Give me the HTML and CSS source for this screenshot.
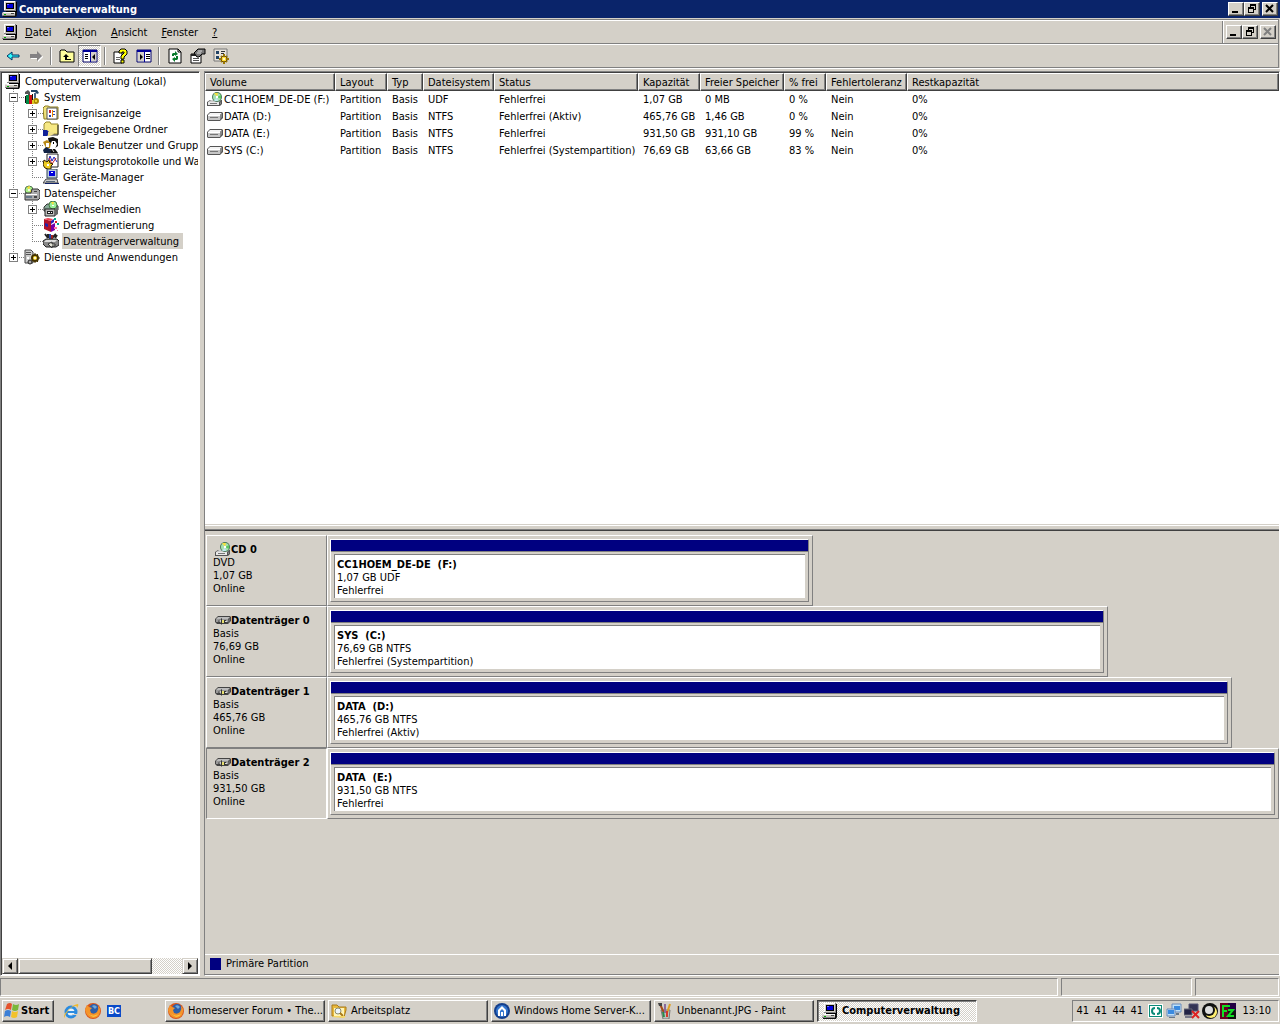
FILE: index.html
```html
<!DOCTYPE html>
<html lang="de">
<head>
  <meta charset="UTF-8">
  <meta name="viewport" content="width=device-width, initial-scale=1.0">
  <title>Computerverwaltung</title>
  <link rel="stylesheet" href="styles.css">
</head>
<body>

<svg class="sprite" aria-hidden="true">
  <symbol id="computer" viewBox="0 0 16 16">
    <path d="M2 0h12v10H2z" fill="#848284"/><path d="M2 0h11v9H2z" fill="#fff"/><path d="M3 1h10v8H3z" fill="#d4d0c8"/><path d="M14 1h1v10H4v-1h10z" fill="#000"/>
    <path d="M4 2h8v6H4z" fill="#000"/><path d="M5 3h6v4H5z" fill="#00d"/><path d="M5 3h2v1H5z" fill="#66f"/>
    <path d="M1 11h12v3H0v-2z" fill="#c8c4bc"/><path d="M2 11h11v1H1z" fill="#fff"/><path d="M13 11h2v3l-1 2H1v-1h12z" fill="#111"/><path d="M0 14h13v1H0z" fill="#848284"/><path d="M9 12h3v1H9z" fill="#444"/><path d="M2 13h2v1H2z" fill="#0a0"/>
  </symbol>
  <symbol id="drive" viewBox="0 0 16 16">
    <path d="M3 3h12l1 1v5l-3 3H1l-1-1V6z" fill="#555"/><path d="M3 4h12l-2 2H1z" fill="#f4f4f4"/><path d="M1 6h12v5H1z" fill="#c6c6c6"/><path d="M1 6h12v1H1z" fill="#fff"/><path d="M13 6l2-2v4l-2 3z" fill="#888"/><path d="M3 8h8v1H3z" fill="#777"/>
  </symbol>
  <symbol id="disk" viewBox="0 0 16 16">
    <path d="M3 3h12l1 1v4l-3 3H2L0 9V6z" fill="#444"/><path d="M3 4h12l-2 2H1z" fill="#bbb"/><path d="M1 6h12v3H1z" fill="#999"/><path d="M13 7l2-2v3l-2 2z" fill="#666"/>
    <path d="M3 8l4-3v2h4v3H7v2z" fill="#333"/><path d="M4 8l2-2v4z" fill="#ccc"/><path d="M7 7h2v3H7z" fill="#e8e070"/><path d="M10 8h2v1h-2z" fill="#ddd"/>
  </symbol>
  <symbol id="cd" viewBox="0 0 16 16">
    <path d="M3 8h12v4l-2 2H0v-4z" fill="#555"/><path d="M4 8h10l-2 2H1z" fill="#ccc"/><path d="M1 10h11v3H1z" fill="#e8e8e8"/><path d="M3 11h7v1H3z" fill="#777"/><path d="M13 11l1-2v3h-1z" fill="#888"/>
    <circle cx="10" cy="5" r="5" fill="#487858"/><circle cx="10" cy="5" r="4" fill="#a6e0b0"/><path d="M10 5L7 1h4z" fill="#f4e040"/><path d="M10 5l4-2v4z" fill="#58c860"/><path d="M10 5l1 4H7z" fill="#bfe8f0"/><path d="M9 4h2v2H9z" fill="#fff"/>
  </symbol>
  <symbol id="back" viewBox="0 0 16 16"><path d="M2 8l5-4v3h7v2H7v3z" fill="#3ff" stroke="#036" stroke-width="1"/></symbol>
  <symbol id="forward" viewBox="0 0 16 16"><path d="M15 9l-5 5v-3H3v-1h7l5-2z" fill="#fff"/><path d="M14 8L9 3v3H2v4h7v3z" fill="#848284"/></symbol>
  <symbol id="folder-up" viewBox="0 0 16 16">
    <path d="M1 13V3l1-1h4l2 2h7v10H1z" fill="#ffff9c" stroke="#000"/><path d="M7 6l-3 3h2v3h6v-1H8V9h2z" fill="#000"/>
  </symbol>
  <symbol id="tree-pane" viewBox="0 0 16 16">
    <path d="M1 2h14v12H1z" fill="#fff" stroke="#006"/><path d="M1 2h14v2H1z" fill="#009"/><path d="M8 4h1v10H8z" fill="#009"/><path d="M3 6h3v1H3zM3 8h3v1H3zM3 10h3v1H3z" fill="#000"/><path d="M9 4h5v9H9z" fill="#d4d0c8"/><path d="M13 6v6l-3-3z" fill="#000"/>
  </symbol>
  <symbol id="action-pane" viewBox="0 0 16 16">
    <path d="M1 2h14v12H1z" fill="#fff" stroke="#006"/><path d="M1 2h14v2H1z" fill="#009"/><path d="M8 4h1v10H8z" fill="#009"/><path d="M10 6h4v1h-4zM10 8h4v1h-4zM10 10h4v1h-4z" fill="#000"/><path d="M2 4h6v9H2z" fill="#d4d0c8"/><path d="M4 6v6l3-3z" fill="#000"/>
  </symbol>
  <symbol id="help" viewBox="0 0 16 16">
    <path d="M1 4h8v11H1z" fill="#fff" stroke="#000"/><path d="M3 9h4v1H3zM3 11h4v1H3z" fill="#666"/>
    <path d="M6 5V3l2-2h4l2 2v3l-3 3v2H8V8l3-3V4H9v1z" fill="#ff0" stroke="#000"/><path d="M8 12h3v3H8z" fill="#ff0" stroke="#000"/>
  </symbol>
  <symbol id="refresh" viewBox="0 0 16 16">
    <path d="M2 1h9l3 3v11H2z" fill="#fff" stroke="#000"/><path d="M11 1v3h3" fill="none" stroke="#000"/>
    <path d="M5 8V6l1-1h2V3l3 3-3 2V7H7v1zM11 8v3l-1 1H8v2l-3-3 3-2v1h1V8z" fill="#087a2c"/>
  </symbol>
  <symbol id="properties" viewBox="0 0 16 16">
    <path d="M1 6h10v9H1z" fill="#fff" stroke="#000"/><path d="M1 6h10v2H1z" fill="#222"/><path d="M3 10h6v1H3zM3 12h6v1H3z" fill="#555"/><path d="M4 5l4-4h7v5h-3L9 9H7z" fill="#777" stroke="#000"/><path d="M8 3h4M7 5h4" stroke="#ddd"/>
  </symbol>
  <symbol id="settings" viewBox="0 0 16 16">
    <path d="M1 1h13v12H1z" fill="#e8e4dc" stroke="#777"/><path d="M3 3h3v3H3zM3 8h3v3H3z" fill="#246"/><path d="M8 3h4v1H8zM8 5h3v1H8z" fill="#333"/>
    <circle cx="11" cy="11" r="3" fill="#fd3" stroke="#530"/><path d="M11 6v2M11 14v2M6 11h2M14 11h2M8 8l1 1M13 13l1 1M14 8l-1 1M9 13l-1 1" stroke="#970" stroke-width="2"/><circle cx="11" cy="11" r="1" fill="#fff"/>
  </symbol>
  <symbol id="tools" viewBox="0 0 16 16">
    <path d="M1 3l3-2 2 2v4H4V5H1z" fill="#555"/><path d="M7 1h6l2 3-2 1-2-2H7z" fill="#246"/><path d="M10 4h2v7h-2z" fill="#468"/><path d="M2 6h3v9H2z" fill="#084"/><path d="M5 6h3v9H5z" fill="#c11"/><path d="M1 7h1v7H1zM8 5h1v9H8z" fill="#111"/>
    <circle cx="12" cy="12" r="2" fill="#fe4" stroke="#a80" stroke-width="2"/><path d="M8 11h2v4H8z" fill="#dc2"/>
  </symbol>
  <symbol id="events" viewBox="0 0 16 16">
    <path d="M0 3l2-2h3l2 1h8v12H1z" fill="#efe27a" stroke="#8a7a20"/><path d="M4 3h10v11H4z" fill="#fff" stroke="#555"/><path d="M6 5h2v3H6z" fill="#c22"/><path d="M9 6h3v1H9zM9 9h3v1H9zM6 10h2v2H6z" fill="#24a"/><path d="M9 5h1v7H9z" fill="#e80"/>
  </symbol>
  <symbol id="shared" viewBox="0 0 16 16">
    <path d="M1 13V3l2-2h4l1 2h7v10z" fill="#f6e884" stroke="#97862c"/><path d="M15 4v10H4" fill="none" stroke="#222"/><path d="M0 9h4l2 2-2 4H0z" fill="#129"/><path d="M5 11h5l1 2-4 2H5z" fill="#f0e08c"/>
  </symbol>
  <symbol id="users" viewBox="0 0 16 16">
    <path d="M5 1l5-1 5 2v7l-3 2-6-5z" fill="#111"/><path d="M9 4h3l2 3-2 5H9L7 8z" fill="#fff"/><path d="M10 5h1v2h-1z" fill="#000"/><path d="M0 5l4-2 4 3-1 5H3z" fill="#b98a18"/><path d="M3 6h3v4H3z" fill="#fff"/><path d="M0 13l3-3 4 2 2 4H1z" fill="#124"/><path d="M7 12h5l3 4H8z" fill="#111"/><path d="M9 12l2 3" stroke="#ddd"/>
  </symbol>
  <symbol id="perf" viewBox="0 0 16 16">
    <path d="M4 1h11v13H4z" fill="#fff" stroke="#222"/><path d="M5 9l2-6 2 5 2-4 3 5" fill="none" stroke="#22b"/><path d="M6 5l3 6 4-6" fill="none" stroke="#c22"/><path d="M1 7l3 2 2-2 1 3 3 1-2 2v3H5l-3-1-2-3z" fill="#ec2" stroke="#320"/><path d="M4 11h2v2H4z" fill="#fff"/>
  </symbol>
  <symbol id="devices" viewBox="0 0 16 16">
    <path d="M4 0h10v9H4z" fill="#bcd" stroke="#345"/><path d="M6 2h6v5H6z" fill="#00d"/><path d="M8 3h2v1H8z" fill="#fff"/><path d="M3 10h11l1 4H0z" fill="#ccc" stroke="#444"/><path d="M3 12h9v1H3z" fill="#567"/><path d="M2 14h14v1H2z" fill="#126"/>
  </symbol>
  <symbol id="storage" viewBox="0 0 16 16">
    <circle cx="5" cy="5" r="4" fill="#ae8" stroke="#575"/><path d="M5 5l-2-3 3-1zM5 5l3 1-1 2z" fill="#fd3"/><circle cx="5" cy="5" r="1" fill="#fff"/>
    <path d="M1 8h6l1-4h6l2 2v7l-2 2H1z" fill="#aaa" stroke="#333"/><path d="M2 9h11v1H2z" fill="#fff"/><path d="M10 6h3v1h-3zM10 11h3v2h-3z" fill="#444"/><path d="M2 11h6v2H2z" fill="#678"/>
  </symbol>
  <symbol id="removable" viewBox="0 0 16 16">
    <path d="M1 6l3-3h7l4 2v4l-3 1H1z" fill="#8a9" stroke="#333"/><circle cx="10" cy="4" r="4" fill="#9e9" stroke="#474"/><path d="M10 4L8 1h3z" fill="#fd3"/><path d="M9 4h2v1H9z" fill="#fff"/><path d="M2 8h10v7H2z" fill="#bbb" stroke="#222"/><path d="M12 8l3-2v7l-3 2z" fill="#666"/><path d="M4 10h6v3H4z" fill="#222"/><path d="M5 11h2v1H5zM8 11h1v1H8z" fill="#fff"/>
  </symbol>
  <symbol id="defrag" viewBox="0 0 16 16">
    <path d="M1 2l7 2v11l-7-3z" fill="#b0122a"/><path d="M1 2l4-1 5 1-2 2z" fill="#e45"/><path d="M8 4l3-2v3l-3 2z" fill="#22b"/><path d="M8 8l4-2v7l-4 2z" fill="#70a"/><path d="M11 1h2v2h-2zM14 6h2v2h-2z" fill="#0a8"/><path d="M12 4h2v2h-2z" fill="#d22"/><path d="M11 10h3v2h-3zM14 13h1v1h-1z" fill="#f7a"/><path d="M2 6l3 1v3l-3-1z" fill="#22a"/>
  </symbol>
  <symbol id="diskmgmt" viewBox="0 0 16 16">
    <path d="M2 1l3 4M5 1v4M9 5l4-4M12 5l2-3" stroke="#222" stroke-width="2"/><path d="M6 1h2v5H6z" fill="#24a"/><path d="M8 2h2v4H8z" fill="#a02020"/><path d="M3 6h11l2 2v4l-3 2H3l-3-3V8z" fill="#888" stroke="#222"/><path d="M3 7h11l-2 2H1z" fill="#ddd"/><path d="M5 11l4-2v2h3v2H9v2z" fill="#e4e4d8" stroke="#333"/>
  </symbol>
  <symbol id="services" viewBox="0 0 16 16">
    <path d="M1 1h6l2 2v11H1z" fill="#ccc" stroke="#444"/><path d="M2 3h5v1H2zM2 5h5v1H2z" fill="#555"/><path d="M3 8h2v2H3z" fill="#fff"/><circle cx="11" cy="9" r="3" fill="#fd3" stroke="#430" stroke-width="2"/><circle cx="11" cy="9" r="1" fill="#fff"/><path d="M11 4v2M11 12v2M15 9h1M14 5l-1 1M8 12l-1 1M14 13l-1-1" stroke="#430"/><circle cx="6" cy="13" r="2" fill="#aaa" stroke="#222"/>
  </symbol>
  <symbol id="windows" viewBox="0 0 16 16">
    <path d="M3 1q3-2 5 0L7 7Q4 5 1 7z" fill="#e5532d"/><path d="M9 1q3 2 6 0l-1 6q-3 2-6 0z" fill="#7ab83a"/><path d="M1 8q3-2 6 0l-1 6q-3-2-6 0z" fill="#3c7fd6"/><path d="M8 8q3 2 6 0l-1 6q-3 2-6 0z" fill="#f3c22b"/>
  </symbol>
  <symbol id="ie" viewBox="0 0 16 16">
    <circle cx="8" cy="9" r="5" fill="#e8f4fc" stroke="#2b8be0" stroke-width="3"/><path d="M4 8h9v2H4z" fill="#2b8be0"/><path d="M9 11h6v1H9z" fill="#d4d0c8"/><path d="M2 15Q-1 13 5 7T15 1q1 1-1 4 0-2-1-2Q9 3 5 8t-3 7z" fill="#f0b92c"/>
  </symbol>
  <symbol id="firefox" viewBox="0 0 16 16">
    <circle cx="8" cy="8" r="8" fill="#d9541a"/><circle cx="9" cy="6" r="5" fill="#2e5fa8"/><path d="M7 3q3-2 5 1l-2 2z" fill="#6fa8dc"/><path d="M0 7L2 2l2 2 3 1-2 2 1 3q3 2 6-1 2-3 1-6 3 3 2 6-1 6-7 6-6 0-8-8z" fill="#f4942a"/><path d="M3 10q4 5 10 1-4 6-10-1z" fill="#fdd24a"/>
  </symbol>
  <symbol id="explorer" viewBox="0 0 16 16">
    <path d="M1 13V2h5l2 2h7v3l-2 7z" fill="#e9b93c" stroke="#a97a18"/><path d="M3 5h10v8H3z" fill="#fff5b8"/><circle cx="7" cy="8" r="3" fill="#eef6fb" stroke="#8a8a70"/><path d="M9 10l3 3" stroke="#a97a18" stroke-width="2"/><path d="M1 14l2-1h12l-2 2z" fill="#f6d868"/>
  </symbol>
  <symbol id="home-server" viewBox="0 0 16 16">
    <circle cx="8" cy="8" r="8" fill="#143f8c"/><circle cx="8" cy="8" r="6" fill="#3577cf"/><path d="M4 13V7l4-4 4 4v6h-2V8L8 6 6 8v5z" fill="#fff"/><path d="M7 9h2v4H7z" fill="#fff"/>
  </symbol>
  <symbol id="paint" viewBox="0 0 16 16">
    <path d="M4 7h9l-1 9H6z" fill="#b9c3bd" stroke="#777"/><path d="M3 1l4 9" stroke="#a34a1a" stroke-width="2"/><path d="M8 1v9" stroke="#8a6a9a" stroke-width="2"/><path d="M13 1l-3 9" stroke="#e0a020" stroke-width="2"/><path d="M6 9l1 5" stroke="#2a8a4a" stroke-width="2"/><path d="M10 8v6" stroke="#d33a2a" stroke-width="2"/><path d="M1 0h4v3H2z" fill="#444"/>
  </symbol>
  <symbol id="tray-sync" viewBox="0 0 16 16"><path d="M0 1h15v14H0z" fill="#fff"/><path d="M1 2h13v12H1z" fill="#0b8a78"/><path d="M2 3h11v10H2z" fill="#fff"/><path d="M7 4Q3 4 3 8t4 4v-2Q5 10 5 8t2-2zM9 4v2q2 0 2 2t-2 2v2q4 0 4-4T9 4z" fill="#0b8a78"/></symbol>
  <symbol id="tray-net" viewBox="0 0 16 16"><path d="M6 1h9v8H6z" fill="#bfe0f8" stroke="#6a8aba"/><path d="M8 3h6v4H8z" fill="#3a8ae0"/><path d="M1 6h8v7H1z" fill="#bfe0f8" stroke="#6a8aba"/><path d="M2 7h6v4H2z" fill="#3a8ae0"/><path d="M3 14h6v1H3zM10 10h3v2h-3z" fill="#678"/></symbol>
  <symbol id="tray-offline" viewBox="0 0 16 16"><path d="M5 1h9v7H5z" fill="#335" stroke="#557"/><path d="M0 6h8v6H0z" fill="#224" stroke="#667"/><path d="M1 13h7v2H1z" fill="#778"/><path d="M8 8l7 7M15 8l-7 7" stroke="#d22" stroke-width="2"/></symbol>
  <symbol id="tray-moon" viewBox="0 0 16 16"><circle cx="8" cy="8" r="8" fill="#111"/><circle cx="9" cy="9" r="6" fill="#ffee70"/><circle cx="7" cy="7" r="6" fill="#111"/><circle cx="7" cy="7" r="4" fill="#ddd"/></symbol>
  <symbol id="tray-fz" viewBox="0 0 16 16"><path d="M0 0h16v16H0z" fill="#111"/><path d="M0 0h8v16H0z" fill="#602"/><path d="M8 0h8v8H8z" fill="#204"/><path d="M3 14V3h7M3 8h4M8 7h5l-5 6h6" fill="none" stroke="#1d2" stroke-width="2"/></symbol>
  <symbol id="min" viewBox="0 0 12 10"><path d="M2 7h6v2H2z" fill="#000"/></symbol>
  <symbol id="restore" viewBox="0 0 12 10"><path d="M4 0h6v6H8V5h1V2H5v1H4zM2 3h6v6H2zM3 5v3h4V5z" fill="#000" fill-rule="evenodd"/></symbol>
  <symbol id="close" viewBox="0 0 12 10"><path d="M2 1l7 7M9 1L2 8" stroke="currentColor" stroke-width="2"/></symbol>
</svg>

<header class="titlebar">
  <svg class="icon"><use href="#computer"/></svg>
  <h1>Computerverwaltung</h1>
  <div class="window-buttons">
    <button class="window-button" aria-label="Minimieren"><svg><use href="#min"/></svg></button>
    <button class="window-button" aria-label="Verkleinern"><svg><use href="#restore"/></svg></button>
    <button class="window-button close" aria-label="Schließen"><svg><use href="#close"/></svg></button>
  </div>
</header>

<div class="rebar">
  <nav class="menubar">
    <svg class="icon"><use href="#computer"/></svg>
    <div class="menus">
      <button class="menu"><u>D</u>atei</button>
      <button class="menu">Ak<u>t</u>ion</button>
      <button class="menu"><u>A</u>nsicht</button>
      <button class="menu"><u>F</u>enster</button>
      <button class="menu"><u>?</u></button>
    </div>
    <div class="window-buttons mdi">
      <button class="window-button" aria-label="Minimieren"><svg><use href="#min"/></svg></button>
      <button class="window-button" aria-label="Verkleinern"><svg><use href="#restore"/></svg></button>
      <button class="window-button close" aria-label="Schließen" disabled><svg><use href="#close"/></svg></button>
    </div>
  </nav>
  <div class="toolbar">
    <button class="tool" aria-label="Zurück"><svg class="icon"><use href="#back"/></svg></button>
    <button class="tool" aria-label="Vorwärts" disabled><svg class="icon"><use href="#forward"/></svg></button>
    <span class="separator"></span>
    <button class="tool" aria-label="Aufwärts"><svg class="icon"><use href="#folder-up"/></svg></button>
    <button class="tool pressed" aria-label="Konsolenstruktur"><svg class="icon"><use href="#tree-pane"/></svg></button>
    <span class="separator"></span>
    <button class="tool" aria-label="Hilfe"><svg class="icon"><use href="#help"/></svg></button>
    <button class="tool" aria-label="Aktionsbereich"><svg class="icon"><use href="#action-pane"/></svg></button>
    <span class="separator"></span>
    <button class="tool" aria-label="Aktualisieren"><svg class="icon"><use href="#refresh"/></svg></button>
    <button class="tool" aria-label="Eigenschaften"><svg class="icon"><use href="#properties"/></svg></button>
    <button class="tool" aria-label="Einstellungen"><svg class="icon"><use href="#settings"/></svg></button>
  </div>
</div>

<main class="content">
  <aside class="pane tree-view">
    <div class="tree">
      <div class="node root"><svg class="icon"><use href="#computer"/></svg><span>Computerverwaltung (Lokal)</span></div>
      <ul>
        <li>
          <div class="node"><button class="toggle open" aria-label="Reduzieren"></button><svg class="icon"><use href="#tools"/></svg><span>System</span></div>
          <ul>
            <li><div class="node"><button class="toggle" aria-label="Erweitern"></button><svg class="icon"><use href="#events"/></svg><span>Ereignisanzeige</span></div></li>
            <li><div class="node"><button class="toggle" aria-label="Erweitern"></button><svg class="icon"><use href="#shared"/></svg><span>Freigegebene Ordner</span></div></li>
            <li><div class="node"><button class="toggle" aria-label="Erweitern"></button><svg class="icon"><use href="#users"/></svg><span>Lokale Benutzer und Gruppen</span></div></li>
            <li><div class="node"><button class="toggle" aria-label="Erweitern"></button><svg class="icon"><use href="#perf"/></svg><span>Leistungsprotokolle und Warnungen</span></div></li>
            <li><div class="node leaf"><svg class="icon"><use href="#devices"/></svg><span>Geräte-Manager</span></div></li>
          </ul>
        </li>
        <li>
          <div class="node"><button class="toggle open" aria-label="Reduzieren"></button><svg class="icon"><use href="#storage"/></svg><span>Datenspeicher</span></div>
          <ul>
            <li><div class="node"><button class="toggle" aria-label="Erweitern"></button><svg class="icon"><use href="#removable"/></svg><span>Wechselmedien</span></div></li>
            <li><div class="node leaf"><svg class="icon"><use href="#defrag"/></svg><span>Defragmentierung</span></div></li>
            <li><div class="node leaf"><svg class="icon"><use href="#diskmgmt"/></svg><span class="selected">Datenträgerverwaltung</span></div></li>
          </ul>
        </li>
        <li>
          <div class="node"><button class="toggle" aria-label="Erweitern"></button><svg class="icon"><use href="#services"/></svg><span>Dienste und Anwendungen</span></div>
        </li>
      </ul>
    </div>
    <div class="scrollbar">
      <button class="scroll-button left" aria-label="Nach links"></button>
      <div class="track"><div class="thumb"></div></div>
      <button class="scroll-button right" aria-label="Nach rechts"></button>
    </div>
  </aside>

  <section class="pane detail">
    <div class="volume-list">
      <table class="volumes">
        <colgroup>
          <col class="col-volume"><col class="col-layout"><col class="col-type"><col class="col-fs"><col class="col-status">
          <col class="col-capacity"><col class="col-free"><col class="col-percent"><col class="col-fault"><col>
        </colgroup>
        <thead>
          <tr><th>Volume</th><th>Layout</th><th>Typ</th><th>Dateisystem</th><th>Status</th><th>Kapazität</th><th>Freier Speicher</th><th>% frei</th><th>Fehlertoleranz</th><th>Restkapazität</th></tr>
        </thead>
        <tbody>
          <tr><td><svg class="icon"><use href="#cd"/></svg>CC1HOEM_DE-DE (F:)</td><td>Partition</td><td>Basis</td><td>UDF</td><td>Fehlerfrei</td><td>1,07 GB</td><td>0 MB</td><td>0 %</td><td>Nein</td><td>0%</td></tr>
          <tr><td><svg class="icon"><use href="#drive"/></svg>DATA (D:)</td><td>Partition</td><td>Basis</td><td>NTFS</td><td>Fehlerfrei (Aktiv)</td><td>465,76 GB</td><td>1,46 GB</td><td>0 %</td><td>Nein</td><td>0%</td></tr>
          <tr><td><svg class="icon"><use href="#drive"/></svg>DATA (E:)</td><td>Partition</td><td>Basis</td><td>NTFS</td><td>Fehlerfrei</td><td>931,50 GB</td><td>931,10 GB</td><td>99 %</td><td>Nein</td><td>0%</td></tr>
          <tr><td><svg class="icon"><use href="#drive"/></svg>SYS (C:)</td><td>Partition</td><td>Basis</td><td>NTFS</td><td>Fehlerfrei (Systempartition)</td><td>76,69 GB</td><td>63,66 GB</td><td>83 %</td><td>Nein</td><td>0%</td></tr>
        </tbody>
      </table>
    </div>
    <div class="splitter"></div>
    <div class="disks">
      <div class="disk">
        <div class="disk-label">
          <h2><svg class="icon"><use href="#cd"/></svg>CD 0</h2>
          <p>DVD</p><p>1,07 GB</p><p>Online</p>
        </div>
        <div class="disk-area">
          <div class="disk-bar" style="width: 51.1%">
            <div class="partition"><div class="stripe"></div><div class="info"><h3>CC1HOEM_DE-DE&nbsp; (F:)</h3><p>1,07 GB UDF</p><p>Fehlerfrei</p></div></div>
          </div>
        </div>
      </div>
      <div class="disk">
        <div class="disk-label">
          <h2><svg class="icon"><use href="#disk"/></svg>Datenträger 0</h2>
          <p>Basis</p><p>76,69 GB</p><p>Online</p>
        </div>
        <div class="disk-area">
          <div class="disk-bar" style="width: 82%">
            <div class="partition"><div class="stripe"></div><div class="info"><h3>SYS&nbsp; (C:)</h3><p>76,69 GB NTFS</p><p>Fehlerfrei (Systempartition)</p></div></div>
          </div>
        </div>
      </div>
      <div class="disk">
        <div class="disk-label">
          <h2><svg class="icon"><use href="#disk"/></svg>Datenträger 1</h2>
          <p>Basis</p><p>465,76 GB</p><p>Online</p>
        </div>
        <div class="disk-area">
          <div class="disk-bar" style="width: 95.1%">
            <div class="partition"><div class="stripe"></div><div class="info"><h3>DATA&nbsp; (D:)</h3><p>465,76 GB NTFS</p><p>Fehlerfrei (Aktiv)</p></div></div>
          </div>
        </div>
      </div>
      <div class="disk">
        <div class="disk-label active">
          <h2><svg class="icon"><use href="#disk"/></svg>Datenträger 2</h2>
          <p>Basis</p><p>931,50 GB</p><p>Online</p>
        </div>
        <div class="disk-area">
          <div class="disk-bar" style="width: 100%">
            <div class="partition"><div class="stripe"></div><div class="info"><h3>DATA&nbsp; (E:)</h3><p>931,50 GB NTFS</p><p>Fehlerfrei</p></div></div>
          </div>
        </div>
      </div>
    </div>
    <div class="legend"><span class="swatch"></span>Primäre Partition</div>
  </section>
</main>

<div class="statusbar"><span class="status-main"></span><span class="status-mid"></span><span class="status-end"></span></div>

<footer class="taskbar">
  <button class="start"><svg class="icon"><use href="#windows"/></svg>Start</button>
  <div class="quick-launch">
    <button class="quick" aria-label="Internet Explorer"><svg class="icon"><use href="#ie"/></svg></button>
    <button class="quick" aria-label="Firefox"><svg class="icon"><use href="#firefox"/></svg></button>
    <button class="quick"><span class="bc">BC</span></button>
  </div>
  <div class="tasks">
    <button class="task"><svg class="icon"><use href="#firefox"/></svg><span>Homeserver Forum • The...</span></button>
    <button class="task"><svg class="icon"><use href="#explorer"/></svg><span>Arbeitsplatz</span></button>
    <button class="task"><svg class="icon"><use href="#home-server"/></svg><span>Windows Home Server-K...</span></button>
    <button class="task"><svg class="icon"><use href="#paint"/></svg><span>Unbenannt.JPG - Paint</span></button>
    <button class="task current"><svg class="icon"><use href="#computer"/></svg><span>Computerverwaltung</span></button>
  </div>
  <div class="tray">
    <span class="temp">41</span><span class="temp">41</span><span class="temp">44</span><span class="temp">41</span>
    <svg class="icon"><use href="#tray-sync"/></svg>
    <svg class="icon"><use href="#tray-net"/></svg>
    <svg class="icon"><use href="#tray-offline"/></svg>
    <svg class="icon"><use href="#tray-moon"/></svg>
    <svg class="icon"><use href="#tray-fz"/></svg>
    <time class="clock">13:10</time>
  </div>
</footer>

</body>
</html>
```
FILE: styles.css
```css
* {
  box-sizing: border-box;
}

body {
  margin: 0;
  height: 100vh;
  display: flex;
  flex-direction: column;
  background-color: #d4d0c8;
  color: black;
  font-family: "DejaVu Sans Condensed", Tahoma, "DejaVu Sans", sans-serif;
  font-size: 11px;
  line-height: 13px;
  overflow: hidden;
}

h1, h2, h3, p, ul {
  margin: 0;
  padding: 0;
  font-size: 11px;
}

ul {
  list-style: none;
}

button {
  margin: 0;
  padding: 0;
  border: 0;
  background: none;
  color: inherit;
  font: inherit;
}

svg {
  display: block;
}

.sprite {
  display: none;
}

.icon {
  width: 16px;
  height: 16px;
  flex: none;
}

/* title bar */
.titlebar {
  display: flex;
  align-items: center;
  gap: 1px;
  height: 18px;
  padding: 0 2px;
  margin-bottom: 1px;
  background-color: #0a246a;
  color: white;
}

.titlebar h1 {
  flex: 1;
}

.window-buttons {
  display: flex;
}

.window-button {
  width: 16px;
  height: 14px;
  padding: 1px;
  background-color: #d4d0c8;
  border: 1px solid;
  border-color: white #404040 #404040 white;
  box-shadow: inset -1px -1px #808080;
  color: black;
}

.window-button svg {
  width: 12px;
  height: 10px;
}

.window-button.close {
  margin-left: 2px;
}

.window-button:disabled {
  color: #808080;
}

/* menu and toolbar */
.rebar {
  margin-right: 1px;
  border-top: 1px solid #808080;
  border-right: 1px solid #808080;
}

.menubar, .toolbar {
  display: flex;
  align-items: center;
  height: 24px;
  border-top: 1px solid white;
  border-bottom: 1px solid #808080;
}

.menubar {
  padding-left: 2px;
}

.menus {
  flex: 1;
  display: flex;
}

.menu {
  padding: 0 7px;
}

.mdi {
  align-self: stretch;
  align-items: center;
  padding: 0 2px;
  border-left: 1px solid white;
  box-shadow: -1px 0 #808080;
}

.toolbar {
  padding-left: 1px;
}

.tool {
  display: flex;
  align-items: center;
  justify-content: center;
  width: 23px;
  height: 22px;
}

.tool.pressed {
  border: 1px solid;
  border-color: #808080 white white #808080;
  background: repeating-conic-gradient(white 0 25%, #d4d0c8 0 50%) 0 0 / 2px 2px;
}

.separator {
  width: 2px;
  height: 18px;
  margin: 0 3px;
  border-left: 1px solid #808080;
  border-right: 1px solid white;
}

/* main area */
.content {
  flex: 1;
  min-height: 0;
  display: flex;
  gap: 4px;
  padding-top: 2px;
  border-top: 1px solid white;
}

.pane {
  display: flex;
  flex-direction: column;
  border: 1px solid;
  border-color: #808080 white white #808080;
}

.tree-view {
  flex: none;
  width: 200px;
  padding: 1px;
  background-color: white;
  box-shadow: inset 1px 1px #404040;
}

.tree {
  flex: 1;
  overflow: hidden;
}

.tree > ul {
  padding-left: 7px;
}

.tree ul ul {
  padding-left: 19px;
}

/* dotted connector lines */
.tree li {
  background: repeating-linear-gradient(#808080 0 1px, transparent 1px 2px) 4px 0 / 1px 100% no-repeat;
}

.tree li:last-child {
  background-size: 1px 8px;
}

.node {
  display: flex;
  align-items: center;
  height: 16px;
  white-space: nowrap;
  background: repeating-linear-gradient(90deg, #808080 0 1px, transparent 1px 2px) 4px 8px / 11px 1px no-repeat;
}

.node span {
  padding: 2px 4px 1px 1px;
  margin-left: 3px;
}

.node.root {
  padding-left: 3px;
  background: none;
}

.node.leaf {
  padding-left: 15px;
}

.node .selected {
  margin-left: 3px;
  background-color: #d4d0c8;
}

.toggle {
  width: 9px;
  height: 9px;
  flex: none;
  margin-right: 6px;
  border: 1px solid #808080;
  background:
    linear-gradient(black, black) 1px 3px / 5px 1px no-repeat,
    linear-gradient(black, black) 3px 1px / 1px 5px no-repeat,
    white;
}

.toggle.open {
  background: linear-gradient(black, black) 1px 3px / 5px 1px no-repeat, white;
}

.scrollbar {
  display: flex;
  height: 16px;
}

.scroll-button, .thumb {
  background-color: #d4d0c8;
  border: 1px solid;
  border-color: #d4d0c8 #404040 #404040 #d4d0c8;
  box-shadow: inset 1px 1px white, inset -1px -1px #808080;
}

.scroll-button {
  display: flex;
  align-items: center;
  justify-content: center;
  width: 16px;
}

.scroll-button::before {
  content: "";
  border: 4px solid transparent;
}

.scroll-button.left::before {
  border-left-width: 0;
  border-right-color: black;
}

.scroll-button.right::before {
  border-right-width: 0;
  border-left-color: black;
}

.track {
  flex: 1;
  background: repeating-conic-gradient(white 0 25%, #d4d0c8 0 50%) 0 0 / 2px 2px;
}

.thumb {
  width: 82%;
  height: 100%;
}

/* volume list */
.detail {
  flex: 1;
  min-width: 0;
  box-shadow: inset 0 1px #404040;
  padding-top: 1px;
}

.volume-list {
  flex: none;
  height: 50%;
  background-color: white;
}

.volumes {
  width: 100%;
  table-layout: fixed;
  border-collapse: separate;
  border-spacing: 0;
}

.volumes th, .volumes td {
  height: 17px;
  padding: 0 0 0 5px;
  text-align: left;
  font-weight: normal;
  white-space: nowrap;
}

.volumes th {
  height: 18px;
  background-color: #d4d0c8;
  border: 1px solid;
  border-color: white #404040 #404040 white;
  box-shadow: inset -1px -1px #808080;
  padding-left: 4px;
}

.volumes td:first-child {
  display: flex;
  align-items: center;
  gap: 1px;
  padding-left: 2px;
}

.col-volume { width: 130px; }
.col-layout { width: 52px; }
.col-type { width: 36px; }
.col-fs { width: 71px; }
.col-status { width: 144px; }
.col-capacity { width: 62px; }
.col-free { width: 84px; }
.col-percent { width: 42px; }
.col-fault { width: 81px; }

.splitter {
  height: 7px;
  flex: none;
  background-color: #d4d0c8;
  border-top: 1px solid #d4d0c8;
  border-bottom: 1px solid #404040;
  box-shadow: inset 0 1px white, inset 0 -1px #808080;
}

/* graphical disk view */
.disks {
  flex: 1;
  padding: 4px 0 0 1px;
}

.disk {
  display: flex;
}

.disk-label {
  width: 121px;
  padding: 7px 0 0 6px;
  border: 1px solid;
  border-color: white #808080 #808080 white;
}

.disk-label.active {
  border-color: #808080 white white #808080;
}

.disk-label h2 {
  display: flex;
  align-items: center;
  height: 13px;
  padding-left: 2px;
}

.disk-area {
  flex: 1;
}

.disk-bar {
  padding: 3px 3px 3px 2px;
  border: 1px solid;
  border-color: white #808080 #808080 white;
}

.partition {
  border: 1px solid;
  border-color: white #808080 #808080 white;
}

.stripe {
  height: 12px;
  background-color: #000080;
  border-bottom: 1px solid #808080;
}

.info {
  height: 44px;
  margin: 2px 3px 3px;
  padding: 3px 2px 0;
  background-color: white;
  border: solid #808080;
  border-width: 1px 0 0 1px;
}

.legend {
  display: flex;
  align-items: center;
  gap: 5px;
  height: 21px;
  padding: 0 0 2px 5px;
  border-top: 1px solid white;
  border-bottom: 1px solid #808080;
}

.swatch {
  width: 11px;
  height: 12px;
  background-color: #000080;
}

/* status bar */
.statusbar {
  display: flex;
  gap: 3px;
  height: 21px;
  padding: 2px 1px 1px 0;
}

.statusbar span {
  border: 1px solid;
  border-color: #808080 white white #808080;
}

.status-main {
  flex: 1;
}

.status-mid {
  width: 131px;
}

.status-end {
  width: 84px;
}

/* taskbar */
.taskbar {
  display: flex;
  align-items: center;
  height: 27px;
  padding: 0 1px 1px 2px;
  border-top: 1px solid white;
}

.start, .task {
  display: flex;
  align-items: center;
  height: 22px;
  border: 1px solid;
  border-color: white #404040 #404040 white;
  box-shadow: inset -1px -1px #808080;
}

.start {
  width: 52px;
  gap: 1px;
  padding-left: 1px;
  font-weight: bold;
}

.quick-launch {
  display: flex;
  gap: 6px;
  width: 111px;
  padding-left: 9px;
}

.bc {
  display: block;
  width: 14px;
  height: 12px;
  background-color: #0a4ac8;
  color: white;
  font-size: 9px;
  font-weight: bold;
  line-height: 12px;
}

.tasks {
  flex: 1;
  display: flex;
  gap: 3px;
}

.task {
  flex: 0 1 160px;
  min-width: 0;
  gap: 4px;
  padding-left: 2px;
  white-space: nowrap;
}

.task.current {
  font-weight: bold;
  padding-left: 4px;
  border-color: #404040 white white #404040;
  box-shadow: inset 1px 1px #808080;
  background: repeating-conic-gradient(white 0 25%, #d4d0c8 0 50%) 0 0 / 2px 2px;
}

.tray {
  display: flex;
  align-items: center;
  gap: 2px;
  height: 22px;
  padding: 0 7px 0 3px;
  border: 1px solid;
  border-color: #808080 white white #808080;
}

.temp {
  width: 16px;
}

.clock {
  margin-left: 4px;
}
```
